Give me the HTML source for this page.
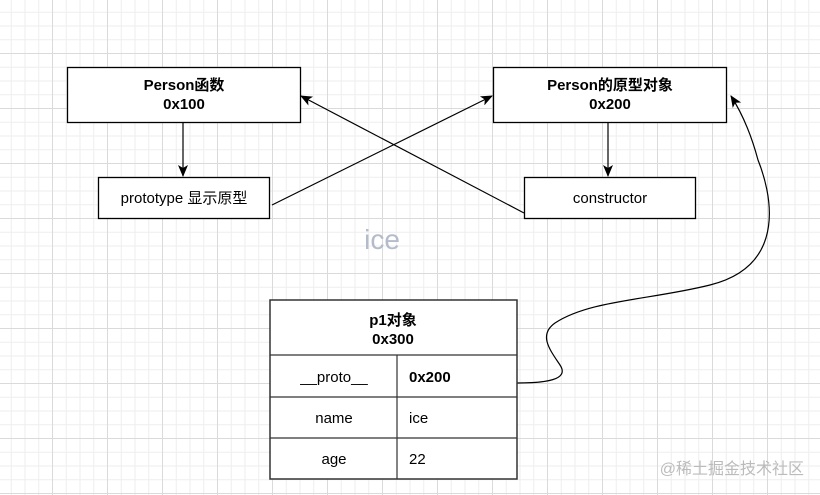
<!DOCTYPE html>
<html><head><meta charset="utf-8"><style>
html,body{margin:0;padding:0;width:820px;height:495px;overflow:hidden;background:#fff}
svg text{font-family:"Liberation Sans","Noto Sans CJK SC",sans-serif}
</style></head><body>
<svg width="820" height="495" xmlns="http://www.w3.org/2000/svg">
<defs>
<pattern id="minor" x="52" y="53" width="13.75" height="13.75" patternUnits="userSpaceOnUse">
<rect x="0" y="0" width="13.75" height="1" fill="#eeeeee"/><rect x="0" y="0" width="1" height="13.75" fill="#eeeeee"/></pattern>
<pattern id="major" x="52" y="53" width="55" height="55" patternUnits="userSpaceOnUse">
<rect x="0" y="0" width="55" height="1" fill="#dadada"/><rect x="0" y="0" width="1" height="55" fill="#dadada"/></pattern>
<marker id="ar" markerWidth="12" markerHeight="12" refX="11" refY="6" orient="auto" markerUnits="userSpaceOnUse">
<path d="M0 1L12 6L0 11L3 6Z" fill="#000"/></marker>
</defs>
<rect width="820" height="495" fill="url(#minor)"/>
<rect width="820" height="495" fill="url(#major)"/>
<g stroke="#000" stroke-width="1.3" fill="#fff">
<rect x="67.5" y="67.5" width="233" height="55"/>
<rect x="493.5" y="67.5" width="233" height="55"/>
<rect x="98.5" y="177.5" width="171" height="41"/>
<rect x="524.5" y="177.5" width="171" height="41"/>
</g>
<g stroke="#000" stroke-width="1.2" fill="none">
<line x1="183" y1="123" x2="183" y2="176" marker-end="url(#ar)"/>
<line x1="608" y1="123" x2="608" y2="176" marker-end="url(#ar)"/>
<line x1="272" y1="205" x2="492" y2="96" marker-end="url(#ar)"/>
<line x1="524" y1="213" x2="301" y2="96" marker-end="url(#ar)"/>
<path d="M517 383C545 383 570 380 560 365C550 350 538 335 555 323C590 300 650 300 710 285C790 265 770 190 758 160C750 130 740 110 731 96" marker-end="url(#ar)"/>
</g>
<g stroke="#333" stroke-width="1.5" fill="#fff">
<rect x="270" y="300" width="247" height="179"/>
</g>
<g stroke="#333" stroke-width="1.2">
<line x1="270" y1="355" x2="517" y2="355"/>
<line x1="270" y1="397" x2="517" y2="397"/>
<line x1="270" y1="438" x2="517" y2="438"/>
<line x1="397" y1="355" x2="397" y2="479"/>
</g>
<g font-size="15" fill="#000" text-anchor="middle">
<text x="184" y="90" font-weight="bold">Person函数</text>
<text x="184" y="109" font-weight="bold">0x100</text>
<text x="610" y="90" font-weight="bold">Person的原型对象</text>
<text x="610" y="109" font-weight="bold">0x200</text>
<text x="184" y="203">prototype 显示原型</text>
<text x="610" y="203">constructor</text>
<text x="393" y="325" font-weight="bold">p1对象</text>
<text x="393" y="344" font-weight="bold">0x300</text>
<text x="334" y="382">__proto__</text>
<text x="334" y="423">name</text>
<text x="334" y="464">age</text>
</g>
<g font-size="15" fill="#000">
<text x="409" y="382" font-weight="bold">0x200</text>
<text x="409" y="423">ice</text>
<text x="409" y="464">22</text>
</g>
<text x="382" y="249" font-size="28" fill="#b4bccb" text-anchor="middle">ice</text>
<text x="804" y="474" font-size="16" fill="#bbb" text-anchor="end">@稀土掘金技术社区</text>
</svg>
</body></html>
